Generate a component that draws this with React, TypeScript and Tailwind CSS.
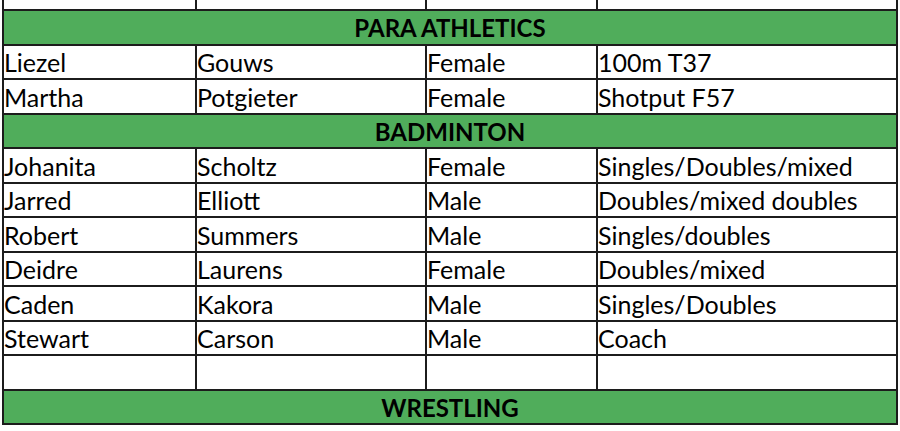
const rows: (string[] | string)[] = [
  "PARA ATHLETICS",
  ["Liezel", "Gouws", "Female", "100m T37"],
  ["Martha", "Potgieter", "Female", "Shotput F57"],
  "BADMINTON",
  ["Johanita", "Scholtz", "Female", "Singles/Doubles/mixed"],
  ["Jarred", "Elliott", "Male", "Doubles/mixed doubles"],
  ["Robert", "Summers", "Male", "Singles/doubles"],
  ["Deidre", "Laurens", "Female", "Doubles/mixed"],
  ["Caden", "Kakora", "Male", "Singles/Doubles"],
  ["Stewart", "Carson", "Male", "Coach"],
  ["", "", "", ""],
  "WRESTLING",
];

function Cells({ cells, className }: { cells: string[]; className: string }) {
  return (
    <div className={`grid grid-cols-[193px_230px_171px_1fr] border-b-2 border-[#1c1c1c] ${className}`}>
      {cells.map((c, i) => (
        <div
          key={i}
          className={`flex items-center pt-[2px] ${i < 3 ? "border-r-2 border-[#1c1c1c]" : ""}`}
        >
          {c}
        </div>
      ))}
    </div>
  );
}

export default function App() {
  return (
    <div className="h-[431px] w-[900px] overflow-hidden bg-white">
      <div
        className="ml-[2px] w-[896px] border-x-2 border-[#1c1c1c] text-[25px] leading-none text-black"
        style={{ fontFamily: "Lato, 'Liberation Sans', sans-serif" }}
      >
        <Cells cells={["", "", "", ""]} className="h-[11px]" />
        {rows.map((r, i) =>
          typeof r === "string" ? (
            <div
              key={i}
              className="flex h-[34.5px] items-center justify-center border-b-2 border-[#1c1c1c] bg-[#50ad5b] pt-[2px] text-[24px] font-bold"
            >
              {r}
            </div>
          ) : (
            <Cells key={i} cells={r} className="h-[34.5px]" />
          )
        )}
      </div>
    </div>
  );
}
